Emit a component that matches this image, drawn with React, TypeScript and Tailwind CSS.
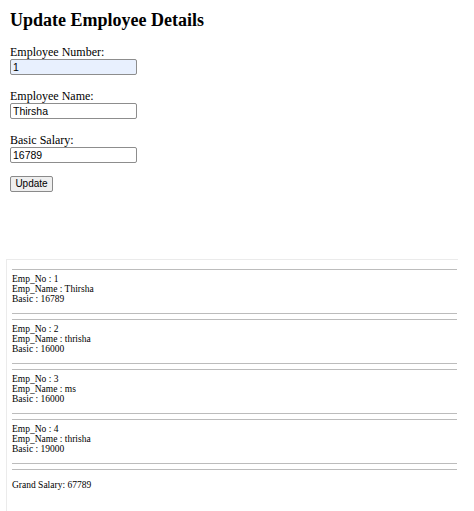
import React from "react";

type Emp = { no: number; name: string; basic: number };

const employees: Emp[] = [
  { no: 1, name: "Thirsha", basic: 16789 },
  { no: 2, name: "thrisha", basic: 16000 },
  { no: 3, name: "ms", basic: 16000 },
  { no: 4, name: "thrisha", basic: 19000 },
];

const serif = { fontFamily: '"Liberation Serif", "Times New Roman", serif' };
const sans = { fontFamily: '"Liberation Sans", Arial, sans-serif' };

function Field({ label, value, filled }: { label: string; value: string; filled?: boolean }) {
  return (
    <div className="mt-[14px]">
      <div className="text-[12px] leading-[14px] text-black">{label}</div>
      <input
        readOnly
        value={value}
        style={sans}
        className={`block h-[16px] w-[127px] rounded-[2px] border border-[#8d8d8d] px-[2px] text-[10.5px] leading-[14px] text-black outline-none ${
          filled ? "bg-[#e8f0fe]" : "bg-white"
        }`}
      />
    </div>
  );
}

function Rule() {
  return <div className="h-px w-full bg-[#bcbcbc]" />;
}

export default function App() {
  const total = employees.reduce((s, e) => s + e.basic, 0);

  return (
    <div className="min-h-[511px] bg-white text-black" style={serif}>
      <div className="pl-[10px] pt-[9px]">
        <h1 className="text-[18px] font-bold leading-[22px]">Update Employee Details</h1>
        <Field label="Employee Number:" value="1" filled />
        <Field label="Employee Name:" value="Thirsha" />
        <Field label="Basic Salary:" value="16789" />
        <button
          type="button"
          style={sans}
          className="mt-[13px] block h-[16px] w-[43px] rounded-[2px] border border-[#8a8a8a] bg-[#efefef] text-[10px] leading-[14px] text-black"
        >
          Update
        </button>
      </div>

      <div className="ml-[6px] mt-[67px] h-[252px] w-[452px] border-l border-t border-[#ebebeb] pl-[5px] pr-px pt-[9px]">
        {employees.map((e, i) => (
          <div key={e.no} className={i > 0 ? "mt-[5px]" : ""}>
            <Rule />
            <div className="mb-[9px] mt-[4px] text-[9.5px] leading-[10px]">
              <div>Emp_No : {e.no}</div>
              <div>Emp_Name : {e.name}</div>
              <div>Basic : {e.basic}</div>
            </div>
            <Rule />
          </div>
        ))}
        <div className="mt-[5px]">
          <Rule />
        </div>
        <div className="mt-[10px] text-[9.5px] leading-[10px]">Grand Salary: {total}</div>
      </div>
    </div>
  );
}
